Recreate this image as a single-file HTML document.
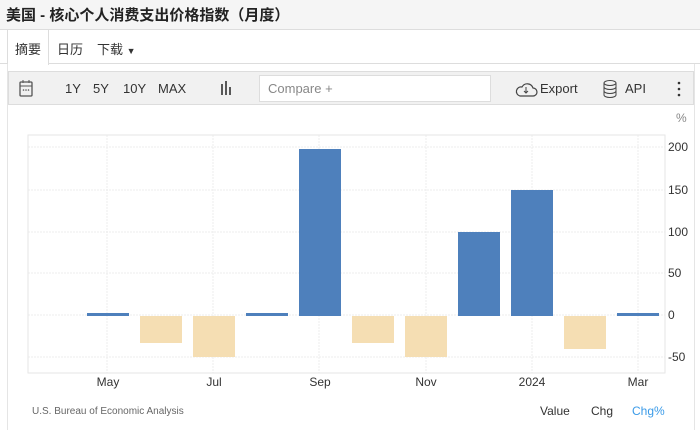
<!DOCTYPE html>
<html><head><meta charset="utf-8"><style>
*{margin:0;padding:0;box-sizing:border-box}
body{width:700px;height:430px;overflow:hidden;background:#fff;font-family:"Liberation Sans","Noto Sans CJK SC",sans-serif;position:relative;color:#333}
.title{position:absolute;left:0;top:0;width:700px;height:30px;background:#f5f5f5;border-bottom:1px solid #ddd;font-size:15px;font-weight:bold;padding:4px 0 0 6px;color:#222}
.tabs{position:absolute;top:30px;left:0;width:700px;height:34px;border-bottom:1px solid #ddd;background:#fff;font-size:13px}
.tab{position:absolute;top:9px}
.act{position:absolute;left:7px;top:0;width:42px;height:35px;background:#fff;border-left:1px solid #ddd;border-right:1px solid #ddd}
.panel{position:absolute;left:7px;top:64px;width:688px;height:366px;border-left:1px solid #e5e5e5;border-right:1px solid #e5e5e5}
.tb{position:absolute;left:8px;top:71px;width:686px;height:34px;background:#f1f1f1;border:1px solid #ddd;font-size:13px}
.tb span{position:absolute;top:9px}
.cmp{position:absolute;left:250px;top:3px;width:232px;height:27px;background:#fff;border:1px solid #ddd;color:#888;padding:5px 8px}
svg{position:absolute;left:0;top:0}
</style></head><body>
<div class="title">美国 - 核心个人消费支出价格指数（月度）</div>
<div class="tabs">
<div class="act"></div>
<span class="tab" style="left:15px">摘要</span>
<span class="tab" style="left:57px">日历</span>
<span class="tab" style="left:97px">下载 <small style="font-size:9px">▼</small></span>
</div>
<div class="panel"></div>
<div class="tb">
<svg width="686" height="34" style="left:0;top:0">
<rect x="11" y="10" width="12" height="14" rx="1" fill="none" stroke="#555" stroke-width="1.3"/><line x1="11" y1="14" x2="23" y2="14" stroke="#555"/><line x1="14" y1="8" x2="14" y2="11" stroke="#555"/><line x1="20" y1="8" x2="20" y2="11" stroke="#555"/><circle cx="14.5" cy="18" r=".8" fill="#555"/><circle cx="17" cy="18" r=".8" fill="#555"/><circle cx="19.5" cy="18" r=".8" fill="#555"/>
<path d="M213 12v11M217 9v14M221 15v8" stroke="#333" stroke-width="1.6"/>
<path d="M511 24h13a4 4 0 0 0 0-8 6 6 0 0 0-11-1 4 4 0 0 0-2 9z" fill="none" stroke="#444" stroke-width="1.2"/><path d="M517 15v6M515 19l2 2 2-2" stroke="#444" fill="none"/>
<ellipse cx="601" cy="11" rx="6" ry="2.5" fill="none" stroke="#444"/><path d="M595 11v12a6 2.5 0 0 0 12 0V11M595 15a6 2.5 0 0 0 12 0M595 19a6 2.5 0 0 0 12 0" fill="none" stroke="#444"/>
<circle cx="670" cy="11" r="1.3" fill="#333"/><circle cx="670" cy="17" r="1.3" fill="#333"/><circle cx="670" cy="23" r="1.3" fill="#333"/>
</svg>
<span style="left:56px">1Y</span><span style="left:84px">5Y</span><span style="left:114px">10Y</span><span style="left:149px">MAX</span>
<div class="cmp">Compare +</div>
<span style="left:531px">Export</span><span style="left:616px">API</span>
</div>
<svg width="700" height="430">
<g stroke="#ececec" stroke-dasharray="2,1">
<line x1="28" y1="147" x2="665" y2="147"/><line x1="28" y1="190" x2="665" y2="190"/><line x1="28" y1="232" x2="665" y2="232"/><line x1="28" y1="273" x2="665" y2="273"/><line x1="28" y1="315" x2="665" y2="315"/><line x1="28" y1="357" x2="665" y2="357"/>
<line x1="107" y1="135" x2="107" y2="373"/><line x1="213" y1="135" x2="213" y2="373"/><line x1="319" y1="135" x2="319" y2="373"/><line x1="426" y1="135" x2="426" y2="373"/><line x1="532" y1="135" x2="532" y2="373"/><line x1="638" y1="135" x2="638" y2="373"/>
</g>
<rect x="28" y="135" width="637" height="238" fill="none" stroke="#e6e6e6"/>
<g fill="#4e80bc">
<rect x="87" y="313" width="42" height="3"/><rect x="246" y="313" width="42" height="3"/><rect x="299" y="149" width="42" height="167"/><rect x="458" y="232" width="42" height="84"/><rect x="511" y="190" width="42" height="126"/><rect x="617" y="313" width="42" height="3"/>
</g>
<g fill="#f5deb3">
<rect x="140" y="316" width="42" height="27"/><rect x="193" y="316" width="42" height="41"/><rect x="352" y="316" width="42" height="27"/><rect x="405" y="316" width="42" height="41"/><rect x="564" y="316" width="42" height="33"/>
</g>
<g font-size="12" fill="#333" font-family="Liberation Sans,sans-serif">
<text x="676" y="122" fill="#888">%</text>
<text x="668" y="151">200</text><text x="668" y="194">150</text><text x="668" y="236">100</text><text x="668" y="277">50</text><text x="668" y="319">0</text><text x="668" y="361">-50</text>
<text x="108" y="386" text-anchor="middle">May</text><text x="214" y="386" text-anchor="middle">Jul</text><text x="320" y="386" text-anchor="middle">Sep</text><text x="426" y="386" text-anchor="middle">Nov</text><text x="532" y="386" text-anchor="middle">2024</text><text x="638" y="386" text-anchor="middle">Mar</text>
<text x="32" y="414" font-size="10" fill="#666">U.S. Bureau of Economic Analysis</text>
<text x="540" y="415">Value</text><text x="591" y="415">Chg</text><text x="632" y="415" fill="#3b9be8">Chg%</text>
</g>
</svg>
</body></html>
